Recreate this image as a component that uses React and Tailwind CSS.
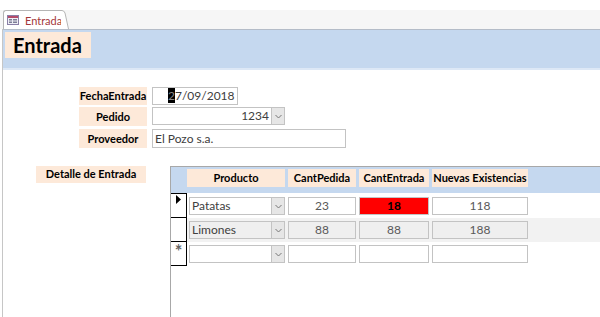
import React from 'react';

const font = { fontFamily: 'Lato, "Open Sans", sans-serif' };

function Combo({ value, align = 'left', gray, w }) {
  return (
    <div className={`flex h-[18px] border border-[#c3c3c3] ${gray ? 'bg-[#efefef]' : 'bg-white'} ${w}`}>
      <div className={`flex-1 px-[2px] leading-[16px] text-[12px] text-[#404040] ${align === 'right' ? 'text-right' : ''}`}>{value}</div>
      <div className="w-[13px] h-full border-l border-[#c3c3c3] bg-[#e6e6e6] flex items-center justify-center">
        <svg width="7" height="5" viewBox="0 0 7 5"><path d="M0.5 1 L3.5 4 L6.5 1" fill="none" stroke="#777" strokeWidth="1" /></svg>
      </div>
    </div>
  );
}

function Cell({ value, w, gray, red }) {
  const bg = red ? 'bg-[#ff0000] font-bold text-black' : gray ? 'bg-[#efefef] text-[#595959]' : 'bg-white text-[#595959]';
  return (
    <div className={`h-[18px] border border-[#c3c3c3] text-center text-[12px] leading-[16px] ${bg} ${w}`}>{value}</div>
  );
}

function Row({ sel, gray, data }) {
  return (
    <div className={`flex h-[24px] items-center ${gray ? 'bg-[#f2f2f2]' : 'bg-white'}`}>
      <div className="w-[16px] h-full bg-white border-b border-r border-black flex items-start justify-center pt-[1px]">
        {sel === 'cur' && <svg width="7" height="9" viewBox="0 0 7 9"><path d="M1 0 L6 4.5 L1 9 Z" fill="#000" /></svg>}
        {sel === 'new' && <span className="text-[#666] text-[18px] leading-[16px] font-bold">*</span>}
      </div>
      <div className="flex gap-[3px] pl-[2px]">
        <Combo value={data[0]} gray={gray} w="w-[96px]" />
        <Cell value={data[1]} gray={gray} w="w-[68px]" />
        <Cell value={data[2]} gray={gray} red={data[3]} w="w-[70px]" />
        <Cell value={data[4]} gray={gray} w="w-[96px]" />
      </div>
    </div>
  );
}

export default function App() {
  const labels = 'bg-[#fde9d9] font-bold text-[11px] text-black text-center';
  return (
    <div className="w-[600px] h-[317px] bg-white overflow-hidden flex flex-col" style={font}>
      <div className="h-[10px]" />
      <div className="h-[19px] bg-[#f6f6f6] flex items-end pl-[3px]">
        <div className="h-[19px] flex">
          <div className="w-[58px] h-full bg-white border-l border-t border-[#b5b5b5] rounded-tl-[3px] flex items-center gap-[6px] pl-[3px]">
            <svg width="12" height="10" viewBox="0 0 12 10" className="shrink-0">
              <rect x="0.5" y="0.5" width="11" height="9" fill="#eeeef4" stroke="#8a7fa6" />
              <rect x="1" y="1" width="10" height="2" fill="#b44b6a" />
              <rect x="2" y="4" width="3" height="1.5" fill="#7d7d95" />
              <rect x="6" y="4" width="4" height="1.5" fill="#7d7d95" />
              <rect x="2" y="6.5" width="3" height="1.5" fill="#7d7d95" />
              <rect x="6" y="6.5" width="4" height="1.5" fill="#7d7d95" />
            </svg>
            <span className="text-[11px] text-[#a4373a] leading-none shrink-0">Entrada</span>
          </div>
          <svg width="8" height="19" viewBox="0 0 8 19" className="block">
            <path d="M0 0 L1 0 Q3 0 4 3 L8 19 L0 19 Z" fill="#fff" />
            <path d="M0 0.5 L1 0.5 Q3 0.5 4 3 L7.5 19" fill="none" stroke="#b5b5b5" />
          </svg>
        </div>
      </div>
      <div className="flex-1 ml-[2px] border-l border-[#c6c6c6] flex flex-col">
        <div className="h-[1px] bg-[#b4bcc8]" />
        <div className="h-[38px] bg-[#c5d8ef] pl-[2px] pt-[2px]">
          <div className="w-[86px] h-[26px] bg-[#fde9d9] pl-[8px] text-[20px] font-bold leading-[26px] text-black">Entrada</div>
        </div>
        <div className="h-[2px] bg-[#dde8f6]" />

        <div className="flex flex-col gap-[2px] pl-[76px] pt-[17px]">
          <div className="flex gap-[5px]">
            <div className={`w-[68px] h-[18px] leading-[18px] ${labels}`}>FechaEntrada</div>
            <div className="w-[86px] h-[18px] border border-[#c3c3c3] text-[12px] leading-[16px] text-[#404040] pl-[15px]">
              <span className="bg-black text-[#888]">2</span>7/09/2018
            </div>
          </div>
          <div className="flex gap-[5px]">
            <div className={`w-[68px] h-[19px] leading-[19px] ${labels}`}>Pedido</div>
            <Combo value="1234" align="right" w="w-[133px]" />
          </div>
          <div className="flex gap-[5px] mt-[1px]">
            <div className={`w-[68px] h-[19px] leading-[19px] ${labels}`}>Proveedor</div>
            <div className="w-[194px] h-[19px] border border-[#c3c3c3] text-[12px] leading-[17px] text-[#404040] pl-[2px]">El Pozo s.a.</div>
          </div>
        </div>

        <div className="flex flex-1 mt-[18px]">
          <div className="pl-[33px] w-[167px]">
            <div className={`w-[110px] h-[17px] leading-[16px] ${labels}`}>Detalle de Entrada</div>
          </div>
          <div className="flex-1 border-l border-t border-[#a8a8a8] flex flex-col">
            <div className="h-[26px] bg-[#c5d8ef] flex gap-[3px] pl-[16px] pt-[2px]">
              <div className={`w-[98px] h-[18px] leading-[18px] ${labels}`}>Producto</div>
              <div className={`w-[68px] h-[18px] leading-[18px] ${labels}`}>CantPedida</div>
              <div className={`w-[70px] h-[18px] leading-[18px] ${labels}`}>CantEntrada</div>
              <div className={`w-[96px] h-[18px] leading-[18px] ${labels}`}>Nuevas Existencias</div>
            </div>
            <div className="border-t border-black w-[16px]" />
            <Row sel="cur" data={['Patatas', '23', '18', true, '118']} />
            <Row gray data={['Limones', '88', '88', false, '188']} />
            <Row sel="new" data={['', '', '', false, '']} />
          </div>
        </div>
      </div>
    </div>
  );
}
